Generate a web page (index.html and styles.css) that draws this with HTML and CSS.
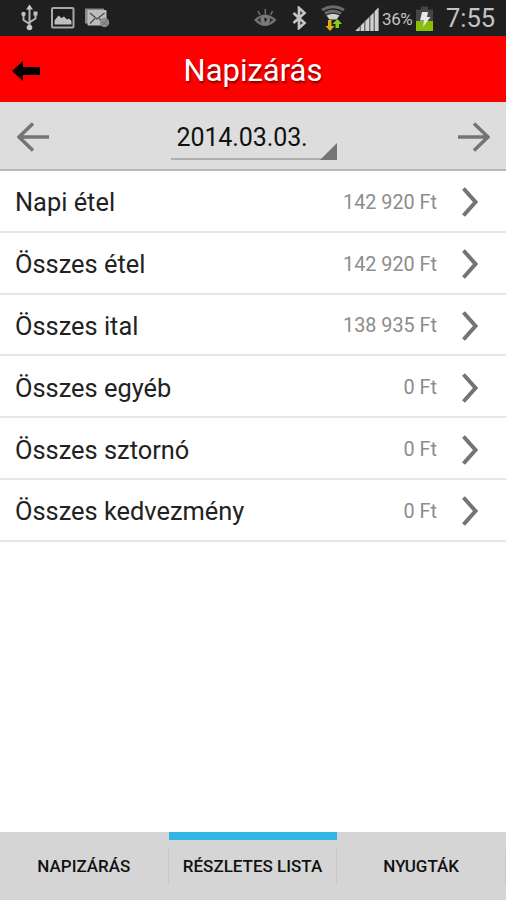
FILE: index.html
```html
<!DOCTYPE html>
<html lang="hu">
<head>
	<meta charset="UTF-8">
	<title>Napizárás</title>
	<link rel="stylesheet" href="styles.css">
</head>
<body>
<div class="screen">
	<!-- status bar -->
	<div class="status">
		<div class="status-left">
			<svg class="usb" width="18" height="28" viewBox="20 4 18 28">
				<path d="M29.500 8v19M29.500 24l-6-4v-6M29.500 22.500l6-4v-6" fill="none" stroke="#b4b4b4" stroke-width="2"/>
				<path d="M29.500 4.500l3.500 5h-7z" fill="#c8c8c8"/>
				<circle cx="29.500" cy="27.500" r="2.800" fill="#c8c8c8"/>
				<circle cx="23.500" cy="14" r="2.200" fill="#c0c0c0"/>
				<path d="M33.500 11.500h4v4h-4z" fill="#c0c0c0"/>
			</svg>
			<svg class="picture" width="24" height="22" viewBox="51 7 24 22">
				<rect x="52" y="8" width="21.500" height="19.500" rx="1" fill="#1d1d1d" stroke="#a8a8a8" stroke-width="2"/>
				<path d="M54.500 24.500v-4l4-5 3 2.500 2.500-1.500 3 3 2-1 2.500 2.500v3.500z" fill="#bebebe"/>
			</svg>
			<svg class="mail" width="26" height="22" viewBox="84 7 26 22">
				<path d="M85 8.500h19v3h-16v12h-3z" fill="#8a8a8a"/>
				<rect x="87.500" y="10" width="19" height="15.500" rx="1" fill="#bcbcbc"/>
				<path d="M90 13l7 6 7.500-6M90 23.500l5-5M104 23l-5-4.500" fill="none" stroke="#484848" stroke-width="1.200"/>
				<circle cx="104.500" cy="22.500" r="4.700" fill="#8e8e8e"/>
				<path d="M102 22l5 3M103 25l4-5" stroke="#747474" stroke-width="1"/>
			</svg>
		</div>
		<div class="status-right">
			<svg class="eye" width="24" height="20" viewBox="253 9 24 20">
				<path d="M254 21q11-11 22.500 0q-11.500 12-22.500 0z" fill="#747474"/>
				<path d="M257 21q8-7 16.500 0q-8.500 7-16.500 0z" fill="#303030"/>
				<circle cx="265.300" cy="20.800" r="4.800" fill="#7c7c7c"/>
				<path d="M264 18.500l3.500 1.500-2.500 3.500z" fill="#202020"/>
				<path d="M265.300 10v5M258 12l2 4M272.500 12l-2 4" stroke="#747474" stroke-width="1.500"/>
			</svg>
			<svg class="bluetooth" width="15" height="24" viewBox="292 6 15 24">
				<path d="M293.500 13l11 10-5.500 5V8l5.500 5-11 10" fill="none" stroke="#c4c4c4" stroke-width="2.700"/>
			</svg>
			<svg class="wifi" width="24" height="26" viewBox="321 5 24 26">
				<path d="M322 10q11-6.500 22 0M325 13.500q8-4.500 16 0" fill="none" stroke="#6a6a6a" stroke-width="3"/>
				<path d="M326.500 15.500q6.500-3.500 13 0l-3 4h-7z" fill="#d0d0d0"/>
				<path d="M328 20h3.500v6h3l-4.500 5-4.500-5h2.500z" fill="#dfab17"/>
				<path d="M335.500 28v-4h-3l5-5 4.500 5h-3v4z" fill="#86cf12"/>
			</svg>
			<svg class="signal" width="24" height="24" viewBox="355 7 24 24">
				<path d="M355 31L378.500 7.500V31z" fill="#707070"/>
				<path d="M355.500 31l4-4v4zM361 31v-5.500l3-3V31zM365.500 31V21l3.500-3.500V31zM370.500 31V16l3-3v18zM375 31V11l3.500-3.500V31z" fill="#d0d0d0"/>
			</svg>
			<span class="percent">36%</span>
			<svg class="battery" width="18" height="26" viewBox="416 6 18 26">
				<path d="M421 6.500h7v3h5V31h-17V9.500h5z" fill="#454545"/>
				<path d="M416 21h17v10h-17z" fill="#8abe0a"/>
				<path d="M422 12h6l-1 5h3.500L423 27l1-6.500h-4z" fill="#e8e8e8"/>
			</svg>
			<span class="clock">7:55</span>
		</div>
	</div>

	<!-- title -->
	<div class="header">
		<svg class="back" width="28" height="20" viewBox="0 0 28 20"><path d="M0 10L11 0v6h17v8H11v6z"/></svg>
		<h1>Napizárás</h1>
	</div>

	<!-- date picker -->
	<div class="datebar">
		<svg class="arrow" width="32" height="30" viewBox="0 0 32 30"><path d="M32 15H2M16 1.500L2 15l14 13.500"/></svg>
		<div class="date">2014.03.03.</div>
		<svg class="arrow" width="32" height="30" viewBox="0 0 32 30"><path d="M0 15h30M16 1.500L30 15 16 28.500"/></svg>
	</div>

	<ul class="list">
		<li>
			<span class="name">Napi étel</span><span class="sum">142 920 Ft</span>
			<svg class="chevron" width="16" height="30" viewBox="0 0 16 30"><path d="M1.500 1.500L13.500 15 1.500 28.500"/></svg>
		</li>
		<li>
			<span class="name">Összes étel</span><span class="sum">142 920 Ft</span>
			<svg class="chevron" width="16" height="30" viewBox="0 0 16 30"><path d="M1.500 1.500L13.500 15 1.500 28.500"/></svg>
		</li>
		<li>
			<span class="name">Összes ital</span><span class="sum">138 935 Ft</span>
			<svg class="chevron" width="16" height="30" viewBox="0 0 16 30"><path d="M1.500 1.500L13.500 15 1.500 28.500"/></svg>
		</li>
		<li>
			<span class="name">Összes egyéb</span><span class="sum">0 Ft</span>
			<svg class="chevron" width="16" height="30" viewBox="0 0 16 30"><path d="M1.500 1.500L13.500 15 1.500 28.500"/></svg>
		</li>
		<li>
			<span class="name">Összes sztornó</span><span class="sum">0 Ft</span>
			<svg class="chevron" width="16" height="30" viewBox="0 0 16 30"><path d="M1.500 1.500L13.500 15 1.500 28.500"/></svg>
		</li>
		<li>
			<span class="name">Összes kedvezmény</span><span class="sum">0 Ft</span>
			<svg class="chevron" width="16" height="30" viewBox="0 0 16 30"><path d="M1.500 1.500L13.500 15 1.500 28.500"/></svg>
		</li>
	</ul>

	<!-- bottom tabs -->
	<div class="tabs">
		<div class="tab"><span>NAPIZÁRÁS</span></div>
		<div class="tab active"><span>RÉSZLETES LISTA</span></div>
		<div class="tab"><span>NYUGTÁK</span></div>
	</div>
</div>
</body>
</html>
```
FILE: styles.css
```css
* {
    margin: 0;
    padding: 0;
    box-sizing: border-box;
}

body {
    font-family: Roboto, "Liberation Sans", sans-serif;
    background-color: #fff;
}

svg {
    display: block;
    flex: none;
}

.screen {
    height: 900px;
    display: flex;
    flex-direction: column;
    overflow: hidden;
}

/* status bar */
.status {
    height: 36px;
    flex: none;
    display: flex;
    justify-content: space-between;
    align-items: center;
    padding: 0 11px 0 20px;
    background-color: #1f1f1f;
    color: #c4c4c4;
}

.status-left,
.status-right {
    display: flex;
    align-items: center;
}

.picture {
    margin-left: 13px;
}

.mail {
    margin-left: 9px;
}

.bluetooth {
    margin-left: 15px;
}

.wifi {
    margin-left: 14px;
}

.signal {
    margin: 2px 0 0 10px;
}

.percent {
    width: 34px;
    margin-left: 3px;
    padding-top: 1px;
    font-size: 17px;
    letter-spacing: -0.4px;
    white-space: nowrap;
}

.battery {
    margin-top: 2px;
}

.clock {
    width: 49px;
    margin-left: 12px;
    font-size: 25.5px;
    line-height: 36px;
    white-space: nowrap;
}

/* title */
.header {
    height: 66px;
    flex: none;
    display: flex;
    align-items: center;
    padding: 3px 40px 0 12px;
    background-color: #f00;
}

.header h1 {
    flex: 1;
    text-align: center;
    font-size: 31px;
    font-weight: 400;
    color: #fff;
    text-shadow: 1px 2px 2px rgba(0, 0, 0, 0.5);
}

/* date picker */
.datebar {
    height: 69px;
    flex: none;
    display: flex;
    justify-content: space-between;
    align-items: center;
    padding: 3px 16px 0 17px;
    background-color: #ddd;
    border-bottom: 2px solid #b8b8b8;
}

.arrow path {
    fill: none;
    stroke: #747474;
    stroke-width: 3.5;
}

.date {
    position: relative;
    width: 166px;
    height: 45px;
    padding-left: 6px;
    line-height: 45px;
    font-size: 25px;
    letter-spacing: -0.1px;
    color: #111;
    border-bottom: 2px solid #b0b0b0;
}

/* dropdown corner */
.date::after {
    content: "";
    position: absolute;
    right: 0;
    bottom: -2px;
    border-left: 17px solid transparent;
    border-bottom: 17px solid #747474;
}

/* list */
.list {
    flex: 1;
    list-style: none;
}

.list li {
    height: 61.8px;
    display: flex;
    align-items: center;
    padding: 3px 28px 0 15px;
    border-bottom: 2px solid #e6e6e6;
}

.name {
    flex: 1;
    font-size: 25.4px;
    color: #222;
}

.sum {
    font-size: 19.8px;
    color: #8c8c8c;
}

.chevron {
    margin-left: 25px;
}

.chevron path {
    fill: none;
    stroke: #747474;
    stroke-width: 4;
}

/* bottom tabs */
.tabs {
    height: 68px;
    flex: none;
    display: flex;
    background-color: #d5d5d5;
}

.tab {
    flex: 1;
    padding-top: 17px;
}

.tab span {
    display: block;
    height: 35px;
    line-height: 35px;
    text-align: center;
    font-size: 17px;
    font-weight: 500;
    color: #111;
    border-right: 1px solid #c8c8c8;
}

.active {
    padding-top: 9px;
    border-top: 8px solid #33b5e5;
}
```
